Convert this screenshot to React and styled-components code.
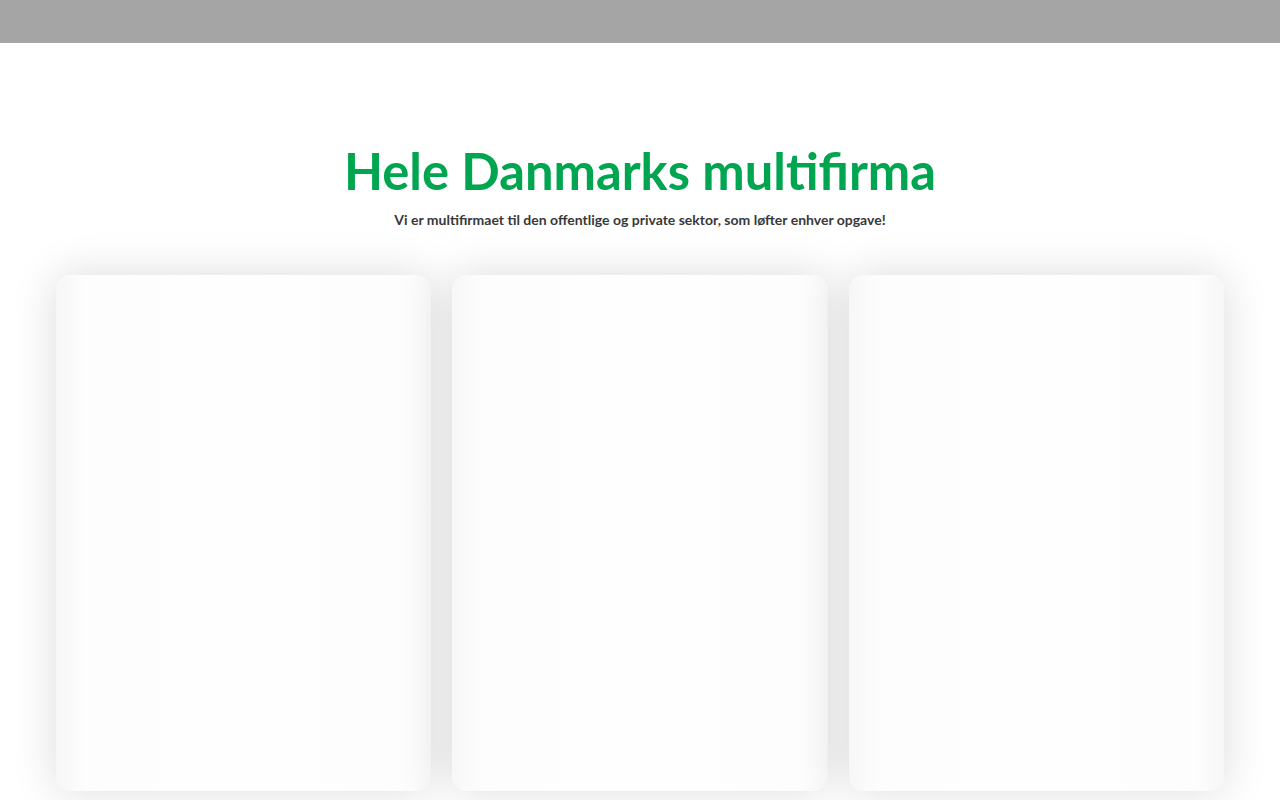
import React from "react";
import styled, { createGlobalStyle } from "styled-components";

const Global = createGlobalStyle`
  html, body { margin: 0; padding: 0; background: #ffffff; }
  body { font-family: Lato, "Noto Sans", sans-serif; overflow: hidden; }
`;

const TopBar = styled.header`
  height: 43px;
  background: #a5a5a5;
`;

const Section = styled.section`
  padding: 97px 56px 40px;
  display: flex;
  flex-direction: column;
  align-items: center;
`;

const Title = styled.h1`
  margin: 0;
  font-family: Lato, sans-serif;
  font-weight: 700;
  font-size: 50.7px;
  line-height: 61px;
  color: #00a54f;
  text-align: center;
`;

const Subtitle = styled.p`
  margin: 8px 0 0;
  font-family: Lato, sans-serif;
  font-weight: 700;
  font-size: 14px;
  line-height: 21px;
  color: #383838;
  text-align: center;
`;

const Cards = styled.div`
  margin-top: 45px;
  width: 100%;
  display: grid;
  grid-template-columns: repeat(3, 1fr);
  gap: 21px;
`;

const Card = styled.div`
  height: 516px;
  border-radius: 15px;
  background: linear-gradient(
    to right,
    #f7f7f7 0px,
    #fdfdfd 30px,
    #fefefe 50%,
    #fdfdfd calc(100% - 30px),
    #f7f7f7 100%
  );
  box-shadow: 0 0 45px rgba(0, 0, 0, 0.14);
`;

export default function App() {
  return (
    <>
      <Global />
      <TopBar />
      <Section>
        <Title>Hele Danmarks multifirma</Title>
        <Subtitle>
          Vi er multifirmaet til den offentlige og private sektor, som løfter enhver opgave!
        </Subtitle>
        <Cards>
          <Card />
          <Card />
          <Card />
        </Cards>
      </Section>
    </>
  );
}
